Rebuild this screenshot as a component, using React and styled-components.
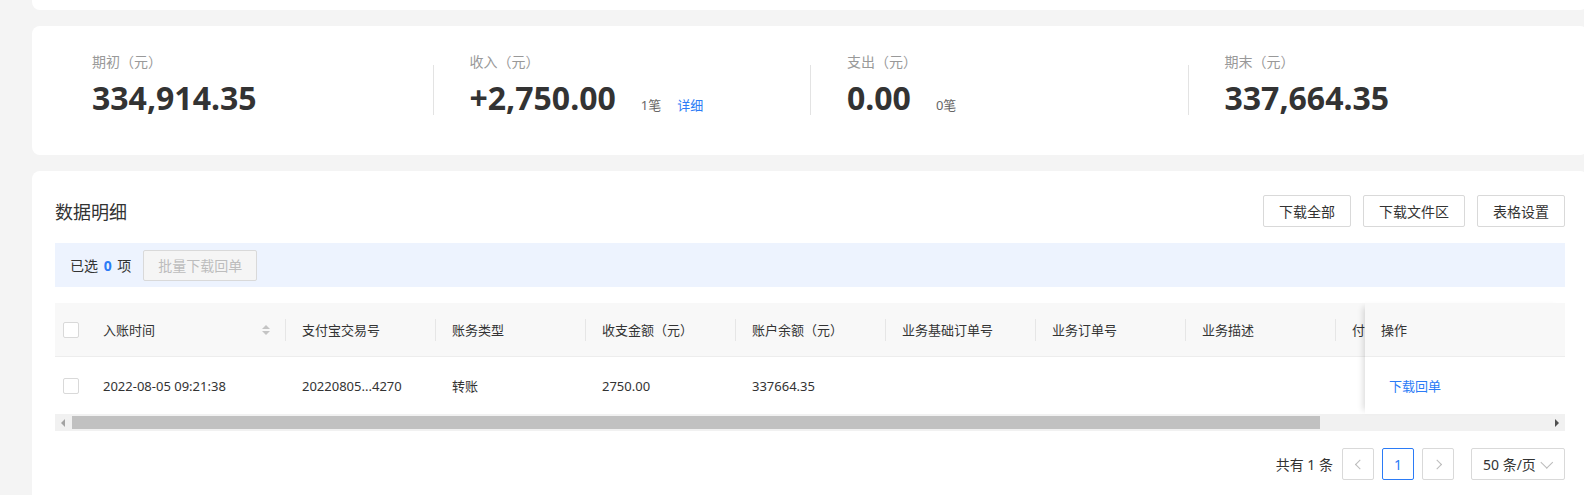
import { createGlobalStyle } from "styled-components";
import styled from "styled-components";

const GlobalStyle = createGlobalStyle`
  html, body {
    margin: 0;
    padding: 0;
    background: #f4f4f4;
    overflow: hidden;
  }
  body {
    font-family: "Noto Sans", "Noto Sans CJK SC", sans-serif;
    color: #333;
  }
  * {
    box-sizing: border-box;
  }
`;

const stats = [
  { label: "期初（元）", value: "334,914.35" },
  { label: "收入（元）", value: "+2,750.00", count: "1笔", link: "详细" },
  { label: "支出（元）", value: "0.00", count: "0笔" },
  { label: "期末（元）", value: "337,664.35" },
];

// 스크롤 영역 컬럼
const columns = [
  { title: "支付宝交易号", value: "20220805...4270" },
  { title: "账务类型", value: "转账" },
  { title: "收支金额（元）", value: "2750.00" },
  { title: "账户余额（元）", value: "337664.35" },
  { title: "业务基础订单号", value: "" },
  { title: "业务订单号", value: "" },
  { title: "业务描述", value: "" },
  { title: "付款方名称", value: "" },
];

const App = () => {
  return (
    <>
      <GlobalStyle />
      <Page>
        <TopCard />

        <Card>
          <StatGrid>
            {stats.map((s, i) => (
              <Stat key={s.label}>
                <Divider visible={i > 0} />
                <StatBody>
                  <StatLabel>{s.label}</StatLabel>
                  <StatLine>
                    <StatValue>{s.value}</StatValue>
                    {s.count && <StatCount>{s.count}</StatCount>}
                    {s.link && <StatLink>{s.link}</StatLink>}
                  </StatLine>
                </StatBody>
              </Stat>
            ))}
          </StatGrid>
        </Card>

        <DetailCard>
          <DetailHeader>
            <Title>数据明细</Title>
            <Actions>
              <Button>下载全部</Button>
              <Button>下载文件区</Button>
              <Button>表格设置</Button>
            </Actions>
          </DetailHeader>

          <SelectBar>
            <span>
              已选 <strong>0</strong> 项
            </span>
            <Button disabled>批量下载回单</Button>
          </SelectBar>

          <TableWrap>
            <ScrollArea>
              <Grid>
                <HeadCell check>
                  <Checkbox />
                </HeadCell>
                <HeadCell divider spread>
                  入账时间
                  <SortIcon>
                    <i />
                    <b />
                  </SortIcon>
                </HeadCell>
                {columns.map((c) => (
                  <HeadCell key={c.title} divider>
                    {c.title}
                  </HeadCell>
                ))}

                <BodyCell check>
                  <Checkbox />
                </BodyCell>
                <BodyCell>2022-08-05 09:21:38</BodyCell>
                {columns.map((c) => (
                  <BodyCell key={c.title}>{c.value}</BodyCell>
                ))}
              </Grid>
            </ScrollArea>
            <FixedCol>
              <FixedHead>操作</FixedHead>
              <FixedBody>
                <LinkText>下载回单</LinkText>
              </FixedBody>
            </FixedCol>
          </TableWrap>

          <Scrollbar>
            <ArrowBtn>
              <Arrow dir="left" />
            </ArrowBtn>
            <Track>
              <Thumb />
            </Track>
            <ArrowBtn>
              <Arrow dir="right" />
            </ArrowBtn>
          </Scrollbar>

          <Pager>
            <Total>共有 1 条</Total>
            <PageBtn>
              <Chevron dir="left" />
            </PageBtn>
            <PageBtn active>1</PageBtn>
            <PageBtn>
              <Chevron dir="right" />
            </PageBtn>
            <SizeSelect>
              50 条/页
              <Chevron dir="down" />
            </SizeSelect>
          </Pager>
        </DetailCard>
      </Page>
    </>
  );
};
export default App;

const Page = styled.div`
  width: 1620px;
  padding-left: 32px;
  display: flex;
  flex-direction: column;
  gap: 16px;
`;

const Card = styled.div`
  width: 1556px;
  background: #fff;
  border-radius: 8px;
  padding: 26px 23px 30px;
`;

const TopCard = styled.div`
  width: 1556px;
  height: 10px;
  background: #fff;
  border-radius: 0 0 8px 8px;
`;

const StatGrid = styled.div`
  display: grid;
  grid-template-columns: repeat(4, 377.5px);
`;

const Stat = styled.div`
  display: flex;
  align-items: flex-start;
`;

const Divider = styled.div`
  width: 1px;
  height: 50px;
  margin-top: 13px;
  background: ${(p) => (p.visible ? "#e3e3e3" : "transparent")};
`;

const StatBody = styled.div`
  padding-left: 36px;
  display: flex;
  flex-direction: column;
`;

const StatLabel = styled.div`
  font-size: 14px;
  line-height: 20px;
  color: #999;
`;

const StatLine = styled.div`
  margin-top: 6px;
  display: flex;
  align-items: baseline;
  line-height: 40px;
`;

const StatValue = styled.span`
  font-size: 32px;
  font-weight: 700;
  color: #333;
  margin-right: 25px;
`;

const StatCount = styled.span`
  font-size: 13px;
  color: #666;
  margin-right: 16px;
`;

const StatLink = styled.span`
  font-size: 13px;
  color: #2b7bf6;
  cursor: pointer;
`;

const DetailCard = styled(Card)`
  padding: 24px 23px 40px;
  height: 360px;
`;

const DetailHeader = styled.div`
  height: 32px;
  display: flex;
  justify-content: space-between;
  align-items: center;
`;

const Title = styled.div`
  font-size: 18px;
  color: #333;
`;

const Actions = styled.div`
  display: flex;
  gap: 12px;
`;

const Button = styled.button`
  height: 32px;
  padding: 0 15px;
  border: 1px solid #d9d9d9;
  border-radius: 2px;
  background: #fff;
  font-family: inherit;
  font-size: 14px;
  color: #333;
  cursor: pointer;
  &:disabled {
    height: 31px;
    padding: 0 14px;
    background: #f5f5f5;
    color: #bdbdbd;
    cursor: not-allowed;
  }
`;

const SelectBar = styled.div`
  margin-top: 16px;
  height: 44px;
  background: #edf3fe;
  display: flex;
  align-items: center;
  gap: 12px;
  padding-left: 15px;
  font-size: 14px;
  color: #333;
  strong {
    color: #2b7bf6;
    font-weight: 700;
    margin: 0 2px;
  }
`;

const TableWrap = styled.div`
  margin-top: 16px;
  display: flex;
`;

const ScrollArea = styled.div`
  flex: 1;
  overflow: hidden;
`;

const Grid = styled.div`
  display: grid;
  grid-template-columns: 32px 199px repeat(8, 150px);
  grid-template-rows: 54px 57px;
  font-size: 13px;
`;

const HeadCell = styled.div`
  display: flex;
  align-items: center;
  justify-content: ${(p) => (p.spread ? "space-between" : "flex-start")};
  padding: ${(p) => (p.check ? "0 0 0 8px" : "0 16px")};
  background: #f8f8f8;
  border-bottom: 1px solid #ededed;
  color: #333;
  white-space: nowrap;
  overflow: hidden;
  ${(p) =>
    p.divider &&
    `background-image: linear-gradient(#e6e6e6, #e6e6e6);
     background-repeat: no-repeat;
     background-size: 1px 22px;
     background-position: right center;`}
`;

const BodyCell = styled.div`
  display: flex;
  align-items: center;
  padding: ${(p) => (p.check ? "0 0 0 8px" : "0 16px")};
  color: #333;
  white-space: nowrap;
`;

const Checkbox = styled.span`
  flex-shrink: 0;
  width: 16px;
  height: 16px;
  border: 1px solid #d9d9d9;
  border-radius: 2px;
  background: #fff;
`;

const SortIcon = styled.span`
  display: flex;
  flex-direction: column;
  gap: 2px;
  i,
  b {
    width: 0;
    height: 0;
    border-left: 4px solid transparent;
    border-right: 4px solid transparent;
  }
  i {
    border-bottom: 4px solid #c4c4c4;
  }
  b {
    border-top: 4px solid #c4c4c4;
  }
`;

const FixedCol = styled.div`
  position: relative;
  z-index: 1;
  width: 200px;
  display: flex;
  flex-direction: column;
  background: #fff;
  box-shadow: -6px 0 6px -4px rgba(0, 0, 0, 0.14);
  font-size: 13px;
`;

const FixedHead = styled.div`
  height: 54px;
  display: flex;
  align-items: center;
  padding-left: 16px;
  background: #f8f8f8;
  border-bottom: 1px solid #ededed;
  color: #333;
`;

const FixedBody = styled.div`
  height: 57px;
  display: flex;
  align-items: center;
  padding-left: 24px;
`;

const LinkText = styled.span`
  color: #2b7bf6;
  cursor: pointer;
`;

const Scrollbar = styled.div`
  height: 17px;
  display: flex;
  background: #f1f1f1;
`;

const ArrowBtn = styled.div`
  width: 16px;
  display: flex;
  align-items: center;
  justify-content: center;
`;

const Arrow = styled.span`
  width: 0;
  height: 0;
  border-top: 4px solid transparent;
  border-bottom: 4px solid transparent;
  ${(p) =>
    p.dir === "left"
      ? "border-right: 4px solid #a3a3a3;"
      : "border-left: 4px solid #505050;"}
`;

const Track = styled.div`
  flex: 1;
  display: flex;
  align-items: center;
  padding-left: 1px;
`;

const Thumb = styled.div`
  width: 84.5%;
  height: 13px;
  background: #c1c1c1;
`;

const Pager = styled.div`
  margin-top: 17px;
  display: flex;
  justify-content: flex-end;
  align-items: center;
  font-size: 14px;
  color: #333;
`;

const Total = styled.span`
  margin-right: 9px;
`;

const PageBtn = styled.div`
  width: 32px;
  height: 32px;
  margin-right: 8px;
  display: flex;
  align-items: center;
  justify-content: center;
  border: 1px solid ${(p) => (p.active ? "#2b7bf6" : "#d9d9d9")};
  border-radius: 2px;
  color: ${(p) => (p.active ? "#2b7bf6" : "#333")};
  font-size: 14px;
  &:nth-of-type(3) {
    margin-right: 17px;
  }
`;

const Chevron = styled.span`
  width: 7px;
  height: 7px;
  border-left: 1px solid #bbb;
  border-bottom: 1px solid #bbb;
  transform: ${(p) =>
    p.dir === "left"
      ? "rotate(45deg) translate(1px, -1px)"
      : p.dir === "right"
      ? "rotate(-135deg) translate(1px, -1px)"
      : "rotate(-45deg) translate(1px, -2px)"};
`;

const SizeSelect = styled.div`
  width: 94px;
  height: 32px;
  border: 1px solid #d9d9d9;
  border-radius: 2px;
  display: flex;
  align-items: center;
  justify-content: space-between;
  padding: 0 12px 0 11px;
  font-size: 14px;
  color: #333;
  span {
    width: 9px;
    height: 9px;
  }
`;
